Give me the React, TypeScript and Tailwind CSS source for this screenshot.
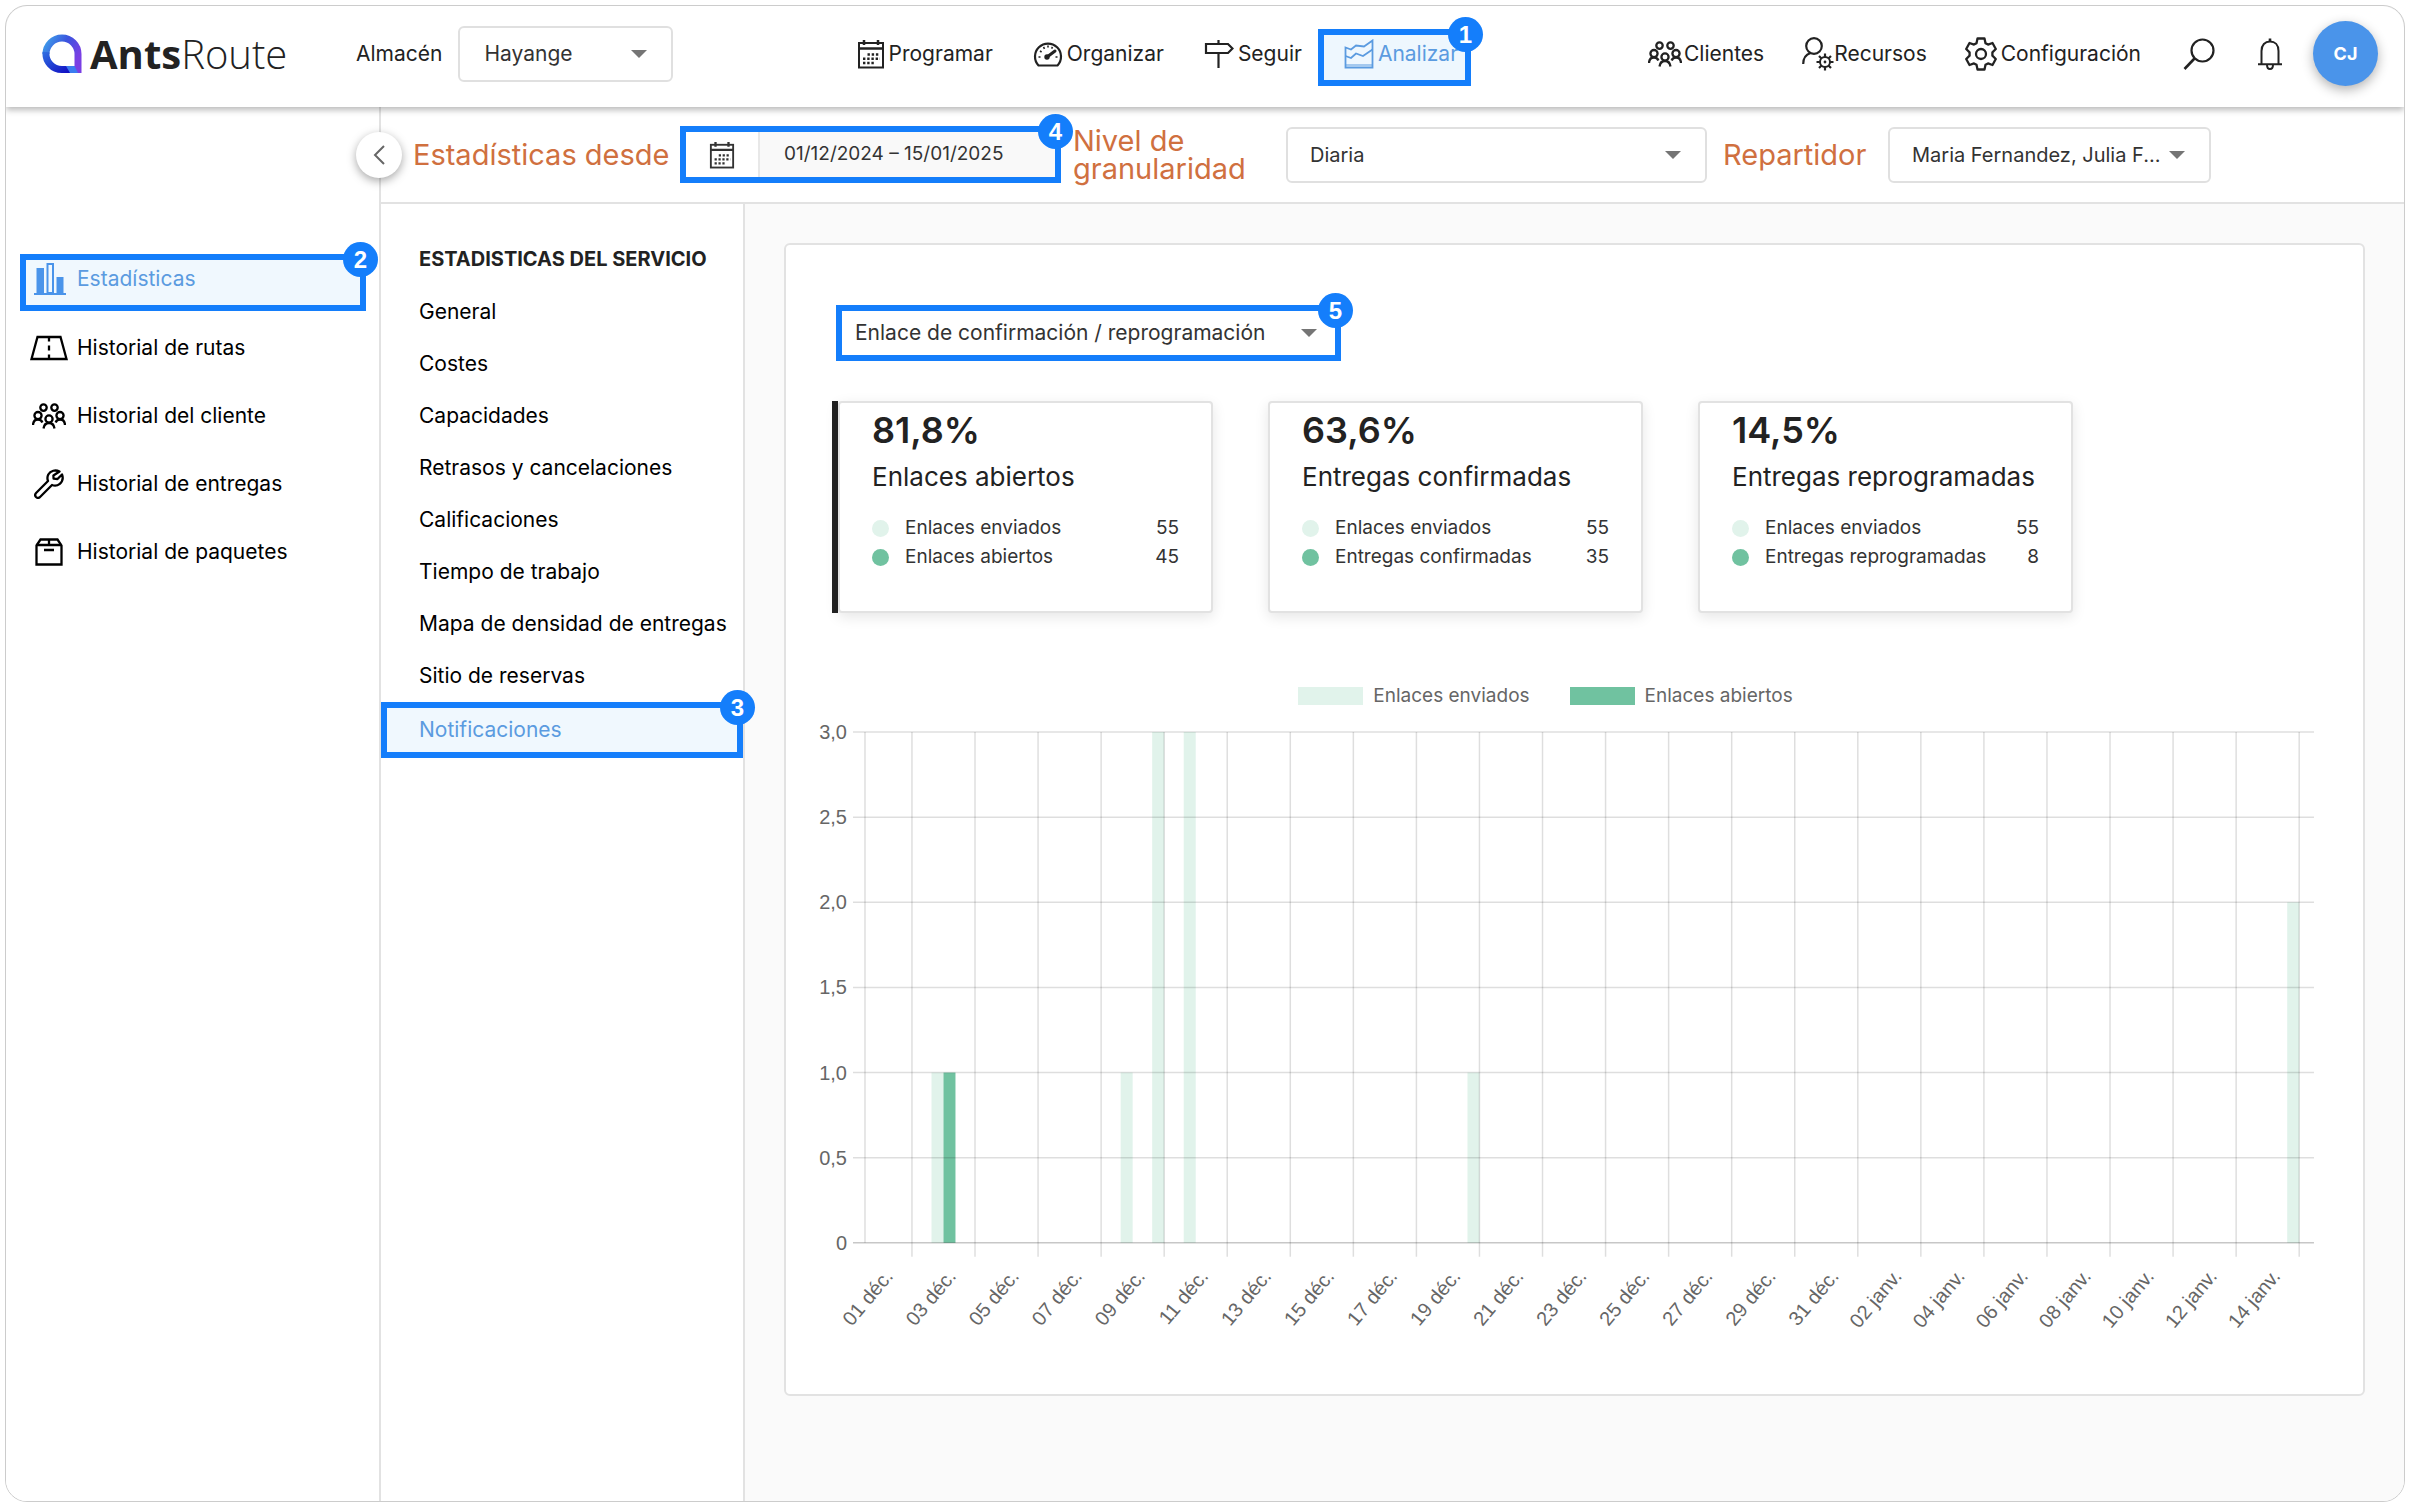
import React, { useState } from 'react';

type IconProps = { className?: string };

// ---------- Icons ----------

const LogoMark = ({ className }: IconProps) => (
  <svg className={className} viewBox="0 0 40 40" fill="none">
    <defs>
      <linearGradient id="logo-top" x1="0" y1="0" x2="1" y2="0.6">
        <stop offset="0" stopColor="#3fa0ea" />
        <stop offset="0.5" stopColor="#3a55de" />
        <stop offset="1" stopColor="#7a3fe4" />
      </linearGradient>
      <linearGradient id="logo-bottom" x1="0" y1="0" x2="1" y2="1">
        <stop offset="0" stopColor="#2f6be0" />
        <stop offset="1" stopColor="#1212c4" />
      </linearGradient>
    </defs>
    <path d="M4 20A16 16 0 0 1 36 20V35.5H28" stroke="url(#logo-top)" strokeWidth="7" />
    <path d="M4 18A16 16 0 0 0 20 35.5H29" stroke="url(#logo-bottom)" strokeWidth="7" />
    <path d="M24 32H32.5L36 39H28Z" fill="#3b7cf0" />
  </svg>
);

const CalendarIcon = ({ className }: IconProps) => (
  <svg className={className} viewBox="0 0 28 30" fill="none" stroke="currentColor" strokeWidth="2">
    <rect x="2" y="4" width="24" height="24.5" />
    <path d="M2 9.5H26" strokeWidth="2.5" />
    <path d="M7 1V6M21 1V6" strokeWidth="2.5" />
    <path d="M10.5 15.5H23M6 19.8H23M6 24H18.5" strokeWidth="2.4" strokeDasharray="2.4 1.8" />
  </svg>
);

const GaugeIcon = ({ className }: IconProps) => (
  <svg className={className} viewBox="0 0 30 28" fill="none" stroke="currentColor" strokeWidth="2.2">
    <path d="M5.5 25.5A13 13 0 1 1 24.5 25.5Z" strokeLinejoin="round" />
    <path d="M14 17L22 11" strokeWidth="3" strokeLinecap="round" />
    <circle cx="14" cy="17" r="1.6" fill="currentColor" />
    <path d="M5.5 17H7.5M7 11L8.6 12M10.5 7L11.5 8.8M15 5.5V7.5M19.5 7L18.6 8.6M22.5 17H24.5" strokeWidth="1.6" />
  </svg>
);

const SignIcon = ({ className }: IconProps) => (
  <svg className={className} viewBox="0 0 30 28" fill="none" stroke="currentColor" strokeWidth="2.2">
    <path d="M2 4H24L28.5 8.5L24 13H2Z" />
    <path d="M14.5 0V4M14.5 13V28" />
  </svg>
);

const AreaChartIcon = ({ className }: IconProps) => (
  <svg className={className} viewBox="0 0 30 30" fill="none" stroke="currentColor" strokeWidth="1.8">
    <path d="M1.5 28.5V8.5L7 10.5L12 6.5L20 7.5L28.5 1.5V28.5Z" />
    <path d="M1.5 17L7 19L12 14.5L19 17L28.5 10.5" />
    <path d="M1 26H29" strokeWidth="1.2" />
  </svg>
);

const PeopleIcon = ({ className }: IconProps) => (
  <svg className={className} viewBox="0 0 34 26" fill="none" stroke="currentColor" strokeWidth="2.3">
    <circle cx="11.5" cy="4.6" r="3.2" />
    <circle cx="22.5" cy="4.6" r="3.2" />
    <circle cx="6" cy="12.6" r="3.6" />
    <circle cx="28" cy="12.6" r="3.6" />
    <circle cx="17" cy="16" r="3.6" />
    <path d="M1 22C1.2 18.6 3 16.5 6 16.5C8 16.5 9.6 17.6 10.4 19.5" />
    <path d="M33 22C32.8 18.6 31 16.5 28 16.5C26 16.5 24.4 17.6 23.6 19.5" />
    <path d="M11.5 25.5C12 22 14 20 17 20C20 20 22 22 22.5 25.5" />
  </svg>
);

const UserCogIcon = ({ className }: IconProps) => (
  <svg className={className} viewBox="0 0 32 34" fill="none" stroke="currentColor" strokeWidth="2.2">
    <circle cx="12" cy="9" r="7.8" />
    <path d="M1.2 27C1.2 21 4 17.5 8.5 16" />
    <circle cx="23" cy="25" r="5" strokeWidth="2" />
    <circle cx="23" cy="25" r="0.8" strokeWidth="1.2" />
    <path
      d="M23 20V16.5M23 30V33.5M18 25H14.5M28 25H31.5M19.5 21.5L17 19M26.5 28.5L29 31M19.5 28.5L17 31M26.5 21.5L29 19"
      strokeWidth="2.2"
    />
  </svg>
);

const GearIcon = ({ className }: IconProps) => (
  <svg className={className} viewBox="0 0 32 34" fill="none" stroke="currentColor" strokeWidth="2.3" strokeLinejoin="round">
    <path d="M12.5 1.5H19.5L20.5 6.2L23 7.6L27.5 6L30.8 12L27.4 15.3V18.7L30.8 22L27.5 28L23 26.4L20.5 27.8L19.5 32.5H12.5L11.5 27.8L9 26.4L4.5 28L1.2 22L4.6 18.7V15.3L1.2 12L4.5 6L9 7.6L11.5 6.2Z" />
    <circle cx="16" cy="17" r="5" />
  </svg>
);

const SearchIcon = ({ className }: IconProps) => (
  <svg className={className} viewBox="0 0 32 32" fill="none" stroke="currentColor" strokeWidth="2.2">
    <circle cx="19.5" cy="12.5" r="11" />
    <path d="M11.5 20.5L1.5 31" strokeWidth="2.6" />
  </svg>
);

const BellIcon = ({ className }: IconProps) => (
  <svg className={className} viewBox="0 0 26 32" fill="none" stroke="currentColor" strokeWidth="2">
    <path d="M4.5 26V13C4.5 7 8 3.6 13 3.6C18 3.6 21.5 7 21.5 13V26" />
    <path d="M1 26.3H25" />
    <path d="M13 0.5V3.5" strokeWidth="2.6" />
    <path d="M10 26.5C10 29.5 11 31 13 31C15 31 16 29.5 16 26.5" />
  </svg>
);

const BarsIcon = ({ className }: IconProps) => (
  <svg className={className} viewBox="0 0 32 32" fill="currentColor">
    <rect x="2.5" y="5" width="7.5" height="25" />
    <rect x="13.5" y="1" width="5.5" height="29" fill="none" stroke="currentColor" strokeWidth="2" />
    <rect x="22.5" y="14" width="7" height="16" />
    <rect x="0" y="30" width="32" height="2" />
  </svg>
);

const RoadIcon = ({ className }: IconProps) => (
  <svg className={className} viewBox="0 0 38 26" fill="none" stroke="currentColor" strokeWidth="2.3">
    <path d="M7.5 2H30.5L36.5 24H1.5Z" />
    <path d="M19 2V6.5M19 10.5V15.5M19 19.5V24" />
  </svg>
);

const WrenchIcon = ({ className }: IconProps) => (
  <svg className={className} viewBox="0 0 30 30" fill="none" stroke="currentColor" strokeWidth="2.3" strokeLinejoin="round">
    <path d="M25.5 2.5C21.5 0.5 16.5 1.5 14.3 5.5C13.2 7.8 13.2 10 14 12L2.3 23.7C0.9 25.2 0.9 26.8 2 28C3.3 29.2 5 29.1 6.3 27.8L18 16C20.3 17 23.5 16.7 25.8 14.8C28.7 12.3 29.2 8.6 28 5.5L23.5 10L19.6 9.6L19.4 6.5Z" />
  </svg>
);

const BoxIcon = ({ className }: IconProps) => (
  <svg className={className} viewBox="0 0 28 28" fill="none" stroke="currentColor" strokeWidth="2.3">
    <path d="M1.5 7.5L5.5 1.5H22.5L26.5 7.5V26.5H1.5Z" />
    <path d="M1.5 7H26.5M14 1.5V7M9 12H19" />
  </svg>
);

const Caret = ({ className }: IconProps) => (
  <svg className={className} viewBox="0 0 16 8" fill="#757575">
    <path d="M0 0H16L8 8Z" />
  </svg>
);

// ---------- Small building blocks ----------

const StepBadge = ({ step }: { step: number }) => (
  <span className="absolute -top-[18px] -right-[18px] z-10 flex size-[35px] items-center justify-center rounded-full bg-[#147efb] font-['Liberation_Sans',sans-serif] text-2xl leading-none font-bold text-white">
    {step}
  </span>
);

type DropdownProps = {
  id: string;
  label?: string;
  options: string[];
  boxClass: string;
  caretClass: string;
};

const Dropdown = ({ id, label, options, boxClass, caretClass }: DropdownProps) => (
  <div className="relative flex items-center">
    <select
      id={id}
      aria-label={label}
      className={`appearance-none bg-white text-[#333] outline-none ${boxClass}`}
    >
      {options.map((option) => (
        <option key={option}>{option}</option>
      ))}
    </select>
    <Caret className={`pointer-events-none absolute h-2 w-4 ${caretClass}`} />
  </div>
);

// ---------- Header ----------

const mainNav = [
  { label: 'Programar', icon: CalendarIcon, iconClass: 'h-[30px] w-7' },
  { label: 'Organizar', icon: GaugeIcon, iconClass: 'h-7 w-[30px]' },
  { label: 'Seguir', icon: SignIcon, iconClass: 'h-7 w-[30px]' },
];

const Header = () => (
  <header className="relative z-20 flex h-[101px] items-center justify-between rounded-t-[22px] bg-white pr-[26px] pb-1.5 pl-9 text-[21px] text-[#222] shadow-[0_3px_6px_rgba(0,0,0,0.28)]">
    <div className="flex items-center">
      <a href="#" className="flex w-[314px] items-center gap-2">
        <LogoMark className="size-10" />
        <span className="font-['Open_Sans',sans-serif] text-[40px] leading-none text-[#222]">
          <span className="font-bold">Ants</span>
          <span className="font-light">Route</span>
        </span>
      </a>
      <label htmlFor="warehouse" className="mr-4">
        Almacén
      </label>
      <Dropdown
        id="warehouse"
        options={['Hayange']}
        boxClass="h-14 w-[215px] rounded-md border-2 border-[#e0e0e0] pl-6"
        caretClass="right-[26px]"
      />
    </div>

    <nav className="ml-1.5 flex items-center">
      {mainNav.map(({ label, icon: Icon, iconClass }) => (
        <a key={label} href="#" className="mr-10 flex items-center gap-1">
          <Icon className={iconClass} />
          {label}
        </a>
      ))}
      <a
        href="#"
        className="relative mt-2 -ml-6 flex h-[57px] w-[153px] items-center gap-1 border-6 border-[#147efb] bg-[#eef7fe] pb-2 pl-5 text-[#5b9be0]"
      >
        <AreaChartIcon className="size-[30px] shrink-0" />
        Analizar
        <StepBadge step={1} />
      </a>
    </nav>

    <div className="flex items-center">
      <a href="#" className="mr-[38px] flex items-center gap-0.5">
        <PeopleIcon className="h-[26px] w-[34px]" />
        Clientes
      </a>
      <a href="#" className="mr-[38px] flex items-center">
        <UserCogIcon className="h-[34px] w-8" />
        Recursos
      </a>
      <a href="#" className="mr-[42px] flex items-center gap-1">
        <GearIcon className="h-[34px] w-8" />
        Configuración
      </a>
      <button aria-label="Buscar" className="mr-[42px]">
        <SearchIcon className="size-8" />
      </button>
      <button aria-label="Notificaciones" className="mr-[30px]">
        <BellIcon className="h-8 w-[26px]" />
      </button>
      <button className="size-[65px] rounded-full bg-[#4a94ea] text-lg font-bold text-white shadow-[0_4px_12px_rgba(0,0,0,0.3)]">
        CJ
      </button>
    </div>
  </header>
);

// ---------- Sidebar ----------

const sideLinks = [
  { label: 'Historial de rutas', icon: RoadIcon, iconClass: 'h-[26px] w-[38px]' },
  { label: 'Historial del cliente', icon: PeopleIcon, iconClass: 'h-[26px] w-[34px]' },
  { label: 'Historial de entregas', icon: WrenchIcon, iconClass: 'size-[30px]' },
  { label: 'Historial de paquetes', icon: BoxIcon, iconClass: 'size-7' },
];

const Sidebar = () => (
  <aside className="relative w-[375px] shrink-0 border-r-2 border-[#e2e2e2] bg-white pt-[147px] pl-[14px] text-[21px] text-black">
    <button
      aria-label="Contraer menú"
      className="absolute top-[25px] -right-[23px] z-10 flex size-[46px] items-center justify-center rounded-full bg-white shadow-[0_3px_10px_rgba(0,0,0,0.35)]"
    >
      <svg className="h-5 w-3" viewBox="0 0 12 20" fill="none" stroke="#666" strokeWidth="2">
        <path d="M11 1L2 10L11 19" />
      </svg>
    </button>
    <nav className="flex flex-col">
      <a
        href="#"
        className="relative mb-[3px] flex h-[57px] w-[346px] items-center border-6 border-[#147efb] bg-[#f0f8fe] pb-2 pl-2 text-[#5b9be0]"
      >
        <BarsIcon className="mr-[11px] size-8 text-[#4a94ea]" />
        Estadísticas
        <StepBadge step={2} />
      </a>
      {sideLinks.map(({ label, icon: Icon, iconClass }) => (
        <a key={label} href="#" className="flex h-[68px] items-center gap-2">
          <span className="flex w-[49px] justify-center pl-2">
            <Icon className={iconClass} />
          </span>
          {label}
        </a>
      ))}
    </nav>
  </aside>
);

// ---------- Filters ----------

const FilterBar = () => (
  <div className="flex h-[97px] shrink-0 items-center border-b-2 border-[#e2e2e2] bg-white pl-8 text-[20px] text-[#333]">
    <label htmlFor="range" className="w-[267px] text-[29px] text-[#d0703f]">
      Estadísticas desde
    </label>
    <div className="relative flex h-[57px] w-[381px] border-6 border-[#147efb] bg-[#f9f9f9]">
      <span className="flex w-[74px] items-center justify-center border-r-2 border-[#e8e8e8] bg-white">
        <CalendarIcon className="h-7 w-[26px]" />
      </span>
      <input
        id="range"
        readOnly
        defaultValue="01/12/2024 – 15/01/2025"
        className="w-full min-w-0 flex-1 bg-transparent pl-6 text-[19px] outline-none"
      />
      <StepBadge step={4} />
    </div>
    <label htmlFor="granularity" className="ml-3 w-[213px] text-[29px] leading-7 text-[#d0703f]">
      Nivel de granularidad
    </label>
    <Dropdown
      id="granularity"
      options={['Diaria', 'Semanal', 'Mensual']}
      boxClass="h-14 w-[421px] rounded-md border-2 border-[#e0e0e0] pl-[22px]"
      caretClass="right-[26px]"
    />
    <label htmlFor="driver" className="ml-4 w-[165px] text-[29px] text-[#d0703f]">
      Repartidor
    </label>
    <Dropdown
      id="driver"
      options={['Maria Fernandez, Julia F...']}
      boxClass="h-14 w-[323px] rounded-md border-2 border-[#e0e0e0] pl-[22px]"
      caretClass="right-[26px]"
    />
  </div>
);

// ---------- Service submenu ----------

const serviceLinks = [
  'General',
  'Costes',
  'Capacidades',
  'Retrasos y cancelaciones',
  'Calificaciones',
  'Tiempo de trabajo',
  'Mapa de densidad de entregas',
  'Sitio de reservas',
];

const ServiceMenu = () => (
  <nav className="w-[364px] shrink-0 border-r-2 border-[#e2e2e2] bg-white pt-7 text-[21px] text-black">
    <h2 className="flex h-[54px] items-center pl-[38px] text-[20px] font-bold text-[#222]">
      ESTADISTICAS DEL SERVICIO
    </h2>
    {serviceLinks.map((label) => (
      <a key={label} href="#" className="flex h-[52px] items-center pl-[38px] whitespace-nowrap">
        {label}
      </a>
    ))}
    <a
      href="#"
      className="relative flex h-14 items-center border-6 border-[#147efb] bg-[#f0f8fe] pl-8 text-[#5b9be0]"
    >
      Notificaciones
      <StepBadge step={3} />
    </a>
  </nav>
);

// ---------- KPI cards ----------

const kpis = [
  { value: '81,8%', title: 'Enlaces abiertos', sent: 55, done: 45 },
  { value: '63,6%', title: 'Entregas confirmadas', sent: 55, done: 35 },
  { value: '14,5%', title: 'Entregas reprogramadas', sent: 55, done: 8 },
];

type KpiProps = (typeof kpis)[number] & { active: boolean; onSelect: () => void };

const KpiCard = ({ value, title, sent, done, active, onSelect }: KpiProps) => (
  <button
    onClick={onSelect}
    className={`flex h-[212px] w-[381px] border-l-6 text-left text-[#222] ${active ? 'border-[#222]' : 'border-transparent'}`}
  >
    <span className="flex h-full w-full flex-col rounded-[4px] border-2 border-[#e2e2e2] bg-white px-8 pt-[7px] shadow-[0_4px_14px_rgba(0,0,0,0.1)]">
      <span className="text-[36px] leading-10 font-semibold">{value}</span>
      <span className="mt-[10px] mb-5 text-[26px] leading-[34px] whitespace-nowrap">{title}</span>
      <span className="flex h-[29px] items-center text-[19px] text-[#333]">
        <span className="mr-4 size-[17px] rounded-full bg-[#e1f3eb]" />
        Enlaces enviados
        <span className="ml-auto">{sent}</span>
      </span>
      <span className="flex h-[29px] items-center text-[19px] text-[#333]">
        <span className="mr-4 size-[17px] rounded-full bg-[#70c2a0]" />
        {title}
        <span className="ml-auto">{done}</span>
      </span>
    </span>
  </button>
);

// ---------- Chart ----------

const yTicks = ['3,0', '2,5', '2,0', '1,5', '1,0', '0,5', '0'];
const xTicks = [
  '01 déc.', '03 déc.', '05 déc.', '07 déc.', '09 déc.', '11 déc.', '13 déc.', '15 déc.',
  '17 déc.', '19 déc.', '21 déc.', '23 déc.', '25 déc.', '27 déc.', '29 déc.', '31 déc.',
  '02 janv.', '04 janv.', '06 janv.', '08 janv.', '10 janv.', '12 janv.', '14 janv.',
];
// day = index counted from 1 December
const bars = [
  { day: 3, sent: 1, opened: 1 },
  { day: 9, sent: 1, opened: 0 },
  { day: 10, sent: 3, opened: 0 },
  { day: 11, sent: 3, opened: 0 },
  { day: 20, sent: 1, opened: 0 },
  { day: 46, sent: 2, opened: 0 },
];

const TOP = 10;
const STEP_Y = 85.2;
const BASE = TOP + STEP_Y * 6;
const STEP_X = 63.1;
const FIRST_LINE = 96;
const dayCenter = (day: number) => FIRST_LINE + STEP_X / 2 + (day - 3) * (STEP_X / 2);

const BarChart = () => (
  <svg className="block w-full" viewBox="0 0 1500 612" fontFamily="'Liberation Sans', Arial, sans-serif" fontSize="20" fill="#666">
    {bars.map(({ day, sent, opened }) => (
      <g key={day}>
        <rect x={dayCenter(day) - 12} y={BASE - sent * STEP_Y * 2} width="12" height={sent * STEP_Y * 2} fill="#e1f3eb" />
        <rect x={dayCenter(day)} y={BASE - opened * STEP_Y * 2} width="12" height={opened * STEP_Y * 2} fill="#70c2a0" />
      </g>
    ))}
    {yTicks.map((label, i) => (
      <g key={label}>
        <path
          d={`M37 ${TOP + i * STEP_Y}H1499`}
          stroke="#000"
          strokeOpacity={label === '0' ? 0.22 : 0.13}
          strokeWidth="1.5"
        />
        <text x="31" y={TOP + i * STEP_Y + 7} textAnchor="end">{label}</text>
      </g>
    ))}
    <path d={`M49 ${TOP}V${BASE}`} stroke="#000" strokeOpacity="0.13" strokeWidth="1.5" />
    {xTicks.map((label, i) => (
      <g key={label}>
        <path
          d={`M${FIRST_LINE + i * STEP_X} ${TOP}V${BASE + 14}`}
          stroke="#000"
          strokeOpacity="0.13"
          strokeWidth="1.5"
        />
        <text transform={`translate(${78 + i * STEP_X} ${BASE + 34}) rotate(-50)`} textAnchor="end">
          {label}
        </text>
      </g>
    ))}
  </svg>
);

const App: React.FC = () => {
  const [selected, setSelected] = useState(0);

  return (
    <div className="min-h-screen bg-white p-[5px] font-[Inter,'Noto_Sans',sans-serif]">
      <div className="flex min-h-[calc(100vh-10px)] flex-col overflow-hidden rounded-[22px] border border-[#ccc]">
        <Header />
        <div className="flex flex-1">
          <Sidebar />
          <div className="flex min-w-0 flex-1 flex-col">
            <FilterBar />
            <div className="flex flex-1">
              <ServiceMenu />
              <main className="min-w-0 flex-1 bg-[#fafafa] p-[39px]">
                <section className="rounded-md border-2 border-[#e2e2e2] bg-white pt-[60px] pr-12 pb-[60px] pl-[30px]">
                  <div className="relative ml-5 w-[505px] border-6 border-[#147efb]">
                    <Dropdown
                      id="stat"
                      label="Notificación"
                      options={['Enlace de confirmación / reprogramación']}
                      boxClass="h-11 w-full pl-[13px] text-[21px]"
                      caretClass="right-[18px]"
                    />
                    <StepBadge step={5} />
                  </div>

                  <div className="mt-10 ml-4 flex gap-[49px]">
                    {kpis.map((kpi, i) => (
                      <KpiCard key={kpi.value} {...kpi} active={i === selected} onSelect={() => setSelected(i)} />
                    ))}
                  </div>

                  <div className="mt-[69px] mb-3 flex h-7 items-center justify-center gap-10 pr-10 text-[19px] text-[#666]">
                    <span className="flex items-center gap-[10px]">
                      <span className="h-[18px] w-[65px] bg-[#e1f3eb]" />
                      Enlaces enviados
                    </span>
                    <span className="flex items-center gap-[10px]">
                      <span className="h-[18px] w-[65px] bg-[#70c2a0]" />
                      Enlaces abiertos
                    </span>
                  </div>
                  <BarChart />
                </section>
              </main>
            </div>
          </div>
        </div>
      </div>
    </div>
  );
};

export default App;
